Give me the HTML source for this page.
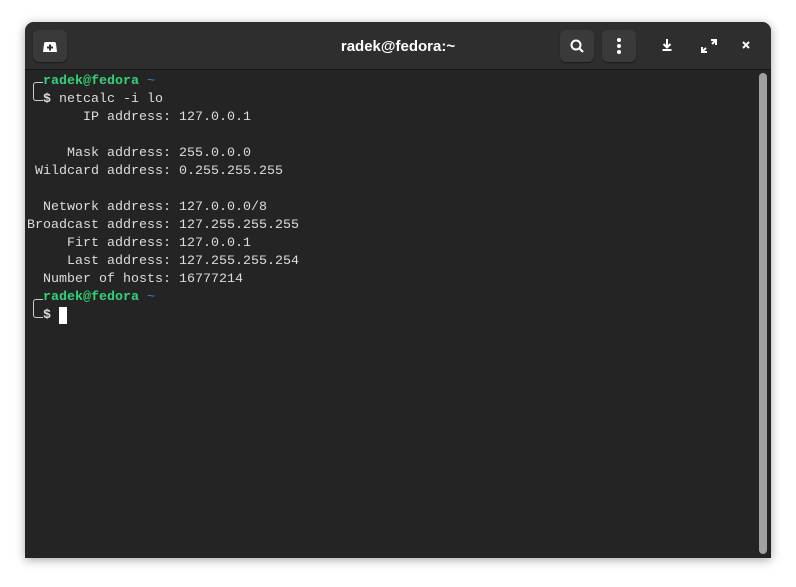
<!DOCTYPE html>
<html><head><style>
html,body{margin:0;padding:0;width:796px;height:587px;background:#fff;overflow:hidden}
.win{position:absolute;left:25px;top:22px;width:746px;height:536px;background:#242424;border-radius:9px 9px 0 0;box-shadow:0 2px 10px rgba(0,0,0,.35);overflow:hidden}
.hdr{position:absolute;left:0;top:0;width:746px;height:47px;background:#2e2e2e;border-bottom:1px solid #151515}
.btn{position:absolute;top:8px;width:34px;height:32px;background:#3a3a3a;border-radius:6px;box-shadow:0 1px 1px #1a1a1a}
.title{position:absolute;left:0;width:746px;top:16px;text-align:center;color:#fff;font:bold 15px "Liberation Sans",sans-serif}
.term{position:absolute;left:2px;top:51px;font:13.33px/18px "Liberation Mono",monospace;color:#ddd;white-space:pre}
.g{color:#33d17a;font-weight:bold}.b{color:#3584e4}
.sb{position:absolute;left:734px;top:51px;width:8px;height:481px;background:#a0a0a0;border-radius:4px}
.br{position:absolute;left:8px;border-left:1.5px solid #ccc;border-top:1.5px solid #ccc;border-bottom:1.5px solid #ccc;width:9px;height:17px;border-radius:3px 0 0 3px}
.cur{position:absolute;left:34px;top:285px;width:8px;height:17px;background:#fff}
</style></head><body>
<div class="win">
<div class="hdr">
<div class="btn" style="left:8px"><svg width="34" height="32"><path d="M10 22 L11 14 Q11 12 13 12 H21 Q23 12 23 14 L24 22 Z" fill="#fff"/><path d="M17 14.5v6M14 17.5h6" stroke="#2e2e2e" stroke-width="2"/></svg></div>
<div class="title">radek@fedora:~</div>
<div class="btn" style="left:535px"><svg width="34" height="32"><circle cx="16" cy="15" r="4.5" fill="none" stroke="#fff" stroke-width="2"/><path d="M19 18l4 4" stroke="#fff" stroke-width="2.2"/></svg></div>
<div class="btn" style="left:577px"><svg width="34" height="32"><circle cx="17" cy="10" r="2" fill="#fff"/><circle cx="17" cy="16" r="2" fill="#fff"/><circle cx="17" cy="22" r="2" fill="#fff"/></svg></div>
<svg style="position:absolute;left:630px;top:14px" width="110" height="20"><path d="M12 3v8M8.5 8l3.5 3.5 3.5-3.5M7.5 14h9" stroke="#fff" stroke-width="2" fill="none"/><path d="M47 11v5h5M47 16l4-4M56 4h5v5M61 4l-4 4" stroke="#fff" stroke-width="2" fill="none"/><path d="M88 6l6 6M94 6l-6 6" stroke="#fff" stroke-width="2"/></svg>
</div>
<div class="br" style="top:60px"></div>
<div class="br" style="top:277px"></div>
<div class="term">  <span class="g">radek@fedora</span> <span class="b">~</span>
  <b>$</b> netcalc -i lo
       IP address: 127.0.0.1

     Mask address: 255.0.0.0
 Wildcard address: 0.255.255.255

  Network address: 127.0.0.0/8
Broadcast address: 127.255.255.255
     Firt address: 127.0.0.1
     Last address: 127.255.255.254
  Number of hosts: 16777214
  <span class="g">radek@fedora</span> <span class="b">~</span>
  <b>$</b></div>
<div class="cur"></div>
<div class="sb"></div>
</div>
</body></html>
